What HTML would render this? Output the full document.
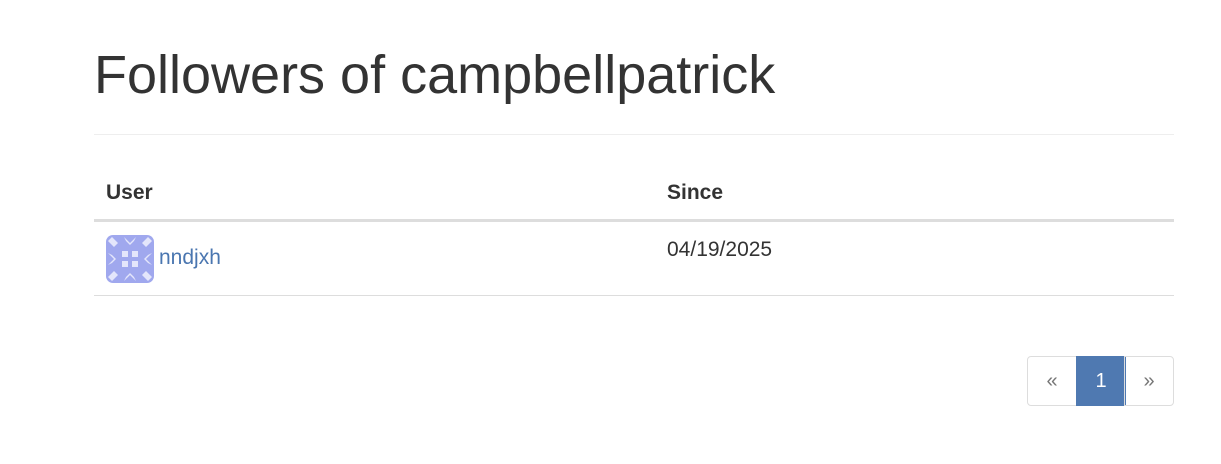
<!DOCTYPE html>
<html><head><style>
body{margin:0;background:#fff;font-family:"Liberation Sans",Arial,sans-serif;color:#333;}
h1{position:absolute;left:94px;top:44px;margin:0;font-size:54px;font-weight:400;line-height:62px;color:#333;}
.hr{position:absolute;left:94px;width:1080px;top:134px;height:1px;background:#eee;}
.th{position:absolute;top:181px;font-weight:bold;font-size:21px;}
.b2{position:absolute;left:94px;width:1080px;top:219px;height:3px;background:#ddd;}
.b1{position:absolute;left:94px;width:1080px;top:295px;height:1px;background:#ddd;}
.av{position:absolute;left:106px;top:235px;width:48px;height:48px;border-radius:7px;background:#a0a8ee;overflow:hidden;}
.pg{position:absolute;top:356px;height:48px;border:1px solid #ddd;display:flex;align-items:center;justify-content:center;font-size:20px;}
</style></head><body>
<h1>Followers of campbellpatrick</h1>
<div class="hr"></div>
<div class="th" style="left:106px">User</div>
<div class="th" style="left:667px">Since</div>
<div class="b2"></div>
<div class="av"><svg width="48" height="48" viewBox="0 0 48 48">
<g fill="#e4e6fb">
<rect x="16" y="16" width="6" height="6"/><rect x="26" y="16" width="6" height="6"/>
<rect x="16" y="26" width="6" height="6"/><rect x="26" y="26" width="6" height="6"/>
<path d="M2 6 L6 2 L12 8 L8 12Z M46 6 L42 2 L36 8 L40 12Z M2 42 L6 46 L12 40 L8 36Z M46 42 L42 46 L36 40 L40 36Z"/>
<path d="M18 2 L24 8 L30 2 L28 6 L24 10 L20 6Z M18 46 L24 40 L30 46 L28 42 L24 38 L20 42Z M2 18 L8 24 L2 30 L6 28 L10 24 L6 20Z M46 18 L40 24 L46 30 L42 28 L38 24 L42 20Z"/>
</g>
</svg></div>
<div style="position:absolute;left:159px;top:246px;font-size:21px;color:#4a76b0">nndjxh</div>
<div style="position:absolute;left:667px;top:238px;font-size:21px;">04/19/2025</div>
<div class="b1"></div>
<div class="pg" style="left:1027px;width:48px;border-radius:4px 0 0 4px;color:#777">«</div>
<div class="pg" style="left:1076px;width:48px;background:#4f79b1;border-color:#4f79b1;color:#fff">1</div>
<div class="pg" style="left:1124px;width:48px;border-radius:0 4px 4px 0;color:#777">»</div>
</body></html>
